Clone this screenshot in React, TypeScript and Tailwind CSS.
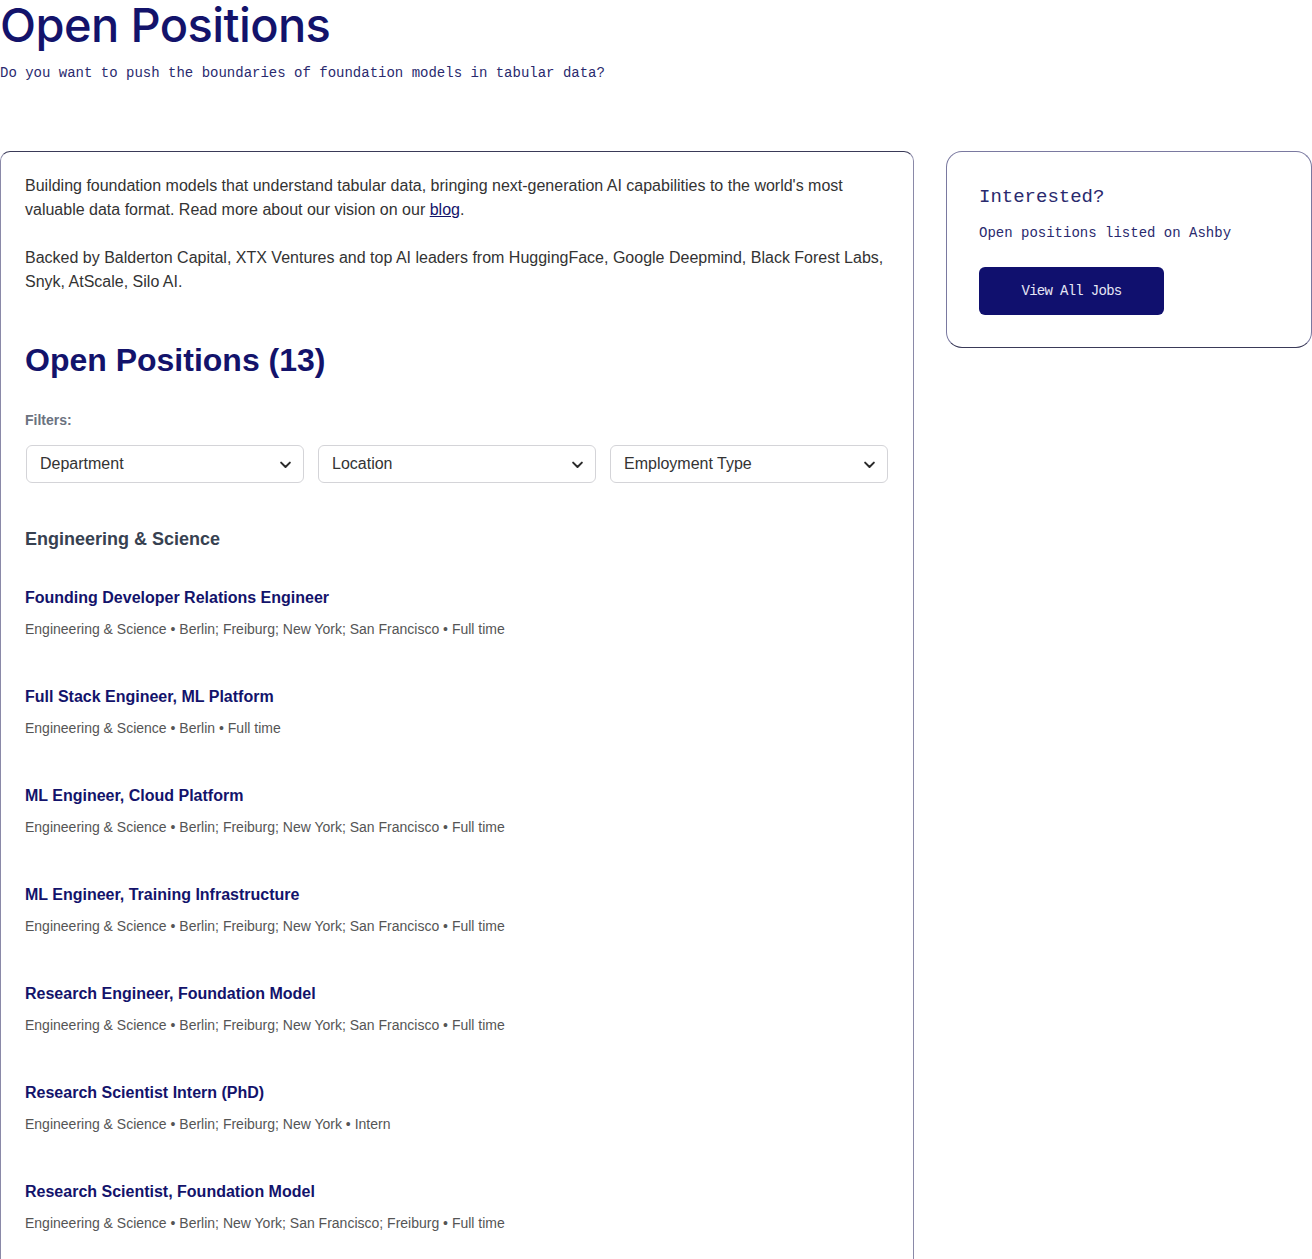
import React from "react";

const jobs = [
  { title: "Founding Developer Relations Engineer", meta: "Engineering & Science • Berlin; Freiburg; New York; San Francisco • Full time" },
  { title: "Full Stack Engineer, ML Platform", meta: "Engineering & Science • Berlin • Full time" },
  { title: "ML Engineer, Cloud Platform", meta: "Engineering & Science • Berlin; Freiburg; New York; San Francisco • Full time" },
  { title: "ML Engineer, Training Infrastructure", meta: "Engineering & Science • Berlin; Freiburg; New York; San Francisco • Full time" },
  { title: "Research Engineer, Foundation Model", meta: "Engineering & Science • Berlin; Freiburg; New York; San Francisco • Full time" },
  { title: "Research Scientist Intern (PhD)", meta: "Engineering & Science • Berlin; Freiburg; New York • Intern" },
  { title: "Research Scientist, Foundation Model", meta: "Engineering & Science • Berlin; New York; San Francisco; Freiburg • Full time" },
  { title: "Research Scientist, Post-Training", meta: "Engineering & Science • Berlin; Freiburg; New York; San Francisco • Full time" },
];

function Chevron() {
  return (
    <svg width="15" height="15" viewBox="0 0 24 24" fill="none" stroke="#2b2b2b" strokeWidth="3.2" strokeLinecap="round" strokeLinejoin="round">
      <path d="M5 9l7 7 7-7" />
    </svg>
  );
}

function Select({ label }: { label: string }) {
  return (
    <div className="flex h-[38px] items-center justify-between rounded-md border border-[#d4d4d8] bg-white pl-[13px] pr-[10px] text-[16px] text-[#333]">
      <span>{label}</span>
      <Chevron />
    </div>
  );
}

export default function App() {
  const sans = { fontFamily: '"Liberation Sans", Arial, sans-serif' };
  const mono = { fontFamily: '"Liberation Mono", monospace' };
  return (
    <div className="h-[1259px] overflow-hidden bg-white">
      <h1 className="text-[47px] leading-[50px] font-medium tracking-[-0.6px] text-[#13136b]" style={{ fontFamily: "Inter, sans-serif" }}>
        Open Positions
      </h1>
      <p className="mt-[13px] text-[14px] leading-[20px] text-[#2a2a6e]" style={mono}>
        Do you want to push the boundaries of foundation models in tabular data?
      </p>
      <div className="mt-[68px] flex gap-[32px]">
        <div className="w-[914px] shrink-0 rounded-[10px] border border-[#8a89a8] border-t-[#3a3a58] pl-[24px] pr-[25px] pt-[22px]" style={sans}>
          <p className="text-[16px] leading-[24px] text-[#333]">
            Building foundation models that understand tabular data, bringing next-generation AI capabilities to the world's most valuable data format. Read more about our vision on our{" "}
            <a className="text-[#13136b] underline">blog</a>.
          </p>
          <p className="mt-[24px] text-[16px] leading-[24px] text-[#333]">
            Backed by Balderton Capital, XTX Ventures and top AI leaders from HuggingFace, Google Deepmind, Black Forest Labs, Snyk, AtScale, Silo AI.
          </p>
          <h2 className="mt-[46px] text-[32px] leading-[40px] font-bold text-[#13136b]">Open Positions (13)</h2>
          <div className="mt-[30px] text-[14px] font-bold leading-[20px] text-[#6b7280]">Filters:</div>
          <div className="mt-[15px] grid grid-cols-3 gap-[14px] pl-[1px]">
            <Select label="Department" />
            <Select label="Location" />
            <Select label="Employment Type" />
          </div>
          <h3 className="mt-[44px] text-[18px] leading-[24px] font-bold text-[#374151]">Engineering & Science</h3>
          <div className="mt-[35px] flex flex-col gap-[48px]">
            {jobs.map((j) => (
              <div key={j.title}>
                <div className="text-[16px] leading-[24px] font-bold text-[#13136b]">{j.title}</div>
                <div className="mt-[11px] text-[14px] leading-[16px] text-[#555]">{j.meta}</div>
              </div>
            ))}
          </div>
        </div>
        <div className="h-[197px] w-[366px] shrink-0 rounded-[16px] border border-[#7a79a0] border-b-[#3a3a58] px-[32px] pt-[32px]">
          <div className="text-[19px] leading-[26px] text-[#2a2a6e]" style={mono}>
            Interested?
          </div>
          <div className="mt-[13px] text-[14px] leading-[20px] text-[#2a2a6e]" style={mono}>
            Open positions listed on Ashby
          </div>
          <button className="mt-[24px] flex h-[48px] w-[185px] items-center justify-center rounded-[6px] bg-[#10106e] text-[14px] text-[#e6e6f5]" style={{ ...mono, letterSpacing: "-0.7px" }}>
            View All Jobs
          </button>
        </div>
      </div>
    </div>
  );
}
